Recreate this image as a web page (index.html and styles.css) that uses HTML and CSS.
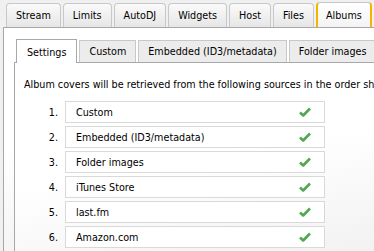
FILE: index.html
```html
<!DOCTYPE html>
<html lang="en">
	<head>
		<meta charset="UTF-8">
		<title>Albums</title>
		<link rel="stylesheet" href="styles.css">
	</head>
	<body>
		<!-- Main tabs -->
		<div class="tabs">
			<div class="tab">Stream</div>
			<div class="tab">Limits</div>
			<div class="tab">AutoDJ</div>
			<div class="tab">Widgets</div>
			<div class="tab">Host</div>
			<div class="tab">Files</div>
			<div class="tab active">Albums</div>
			<div class="tab">&nbsp;</div>
		</div>

		<div class="panel">
			<!-- Sub tabs -->
			<div class="subtabs">
				<div class="subtab active">Settings</div>
				<div class="subtab">Custom</div>
				<div class="subtab">Embedded (ID3/metadata)</div>
				<div class="subtab">Folder images</div>
			</div>

			<div class="subpanel">
				<p class="intro">Album covers will be retrieved from the following sources in the order shown below.</p>

				<ol class="sources">
					<li><span class="num">1.</span><div class="source">Custom<span class="check"></span></div></li>
					<li><span class="num">2.</span><div class="source">Embedded (ID3/metadata)<span class="check"></span></div></li>
					<li><span class="num">3.</span><div class="source">Folder images<span class="check"></span></div></li>
					<li><span class="num">4.</span><div class="source">iTunes Store<span class="check"></span></div></li>
					<li><span class="num">5.</span><div class="source">last.fm<span class="check"></span></div></li>
					<li><span class="num">6.</span><div class="source">Amazon.com<span class="check"></span></div></li>
				</ol>
			</div>
		</div>
	</body>
</html>
```
FILE: styles.css
```css
body {
	margin: 0;
	padding: 3px 0 0 3px;
	background: #f0f0f0;
	font-family: "DejaVu Sans Condensed", "DejaVu Sans", sans-serif;
	font-stretch: condensed;
	font-size: 10.7px;
	color: #000;
	overflow: hidden;
	height: 248px;
}

/* Main tabs */
.tabs {
	display: flex;
	gap: 2px;
	padding-left: 3px;
	white-space: nowrap;
}

.tab {
	height: 23px;
	line-height: 23px;
	padding: 0 9px;
	border: 1px solid #c8c8c8;
	border-bottom: none;
	border-radius: 4px 4px 0 0;
	background: linear-gradient(#fafafa, #e6e6e6);
	color: #000;
}

.tab.active {
	height: 24px;
	margin-top: -1px;
	line-height: 25px;
	background: linear-gradient(#ffffff, #f3f3f3);
	border-color: #c8c8c8 #f4b400;
	border-width: 1px 2px 0 2px;
	padding: 0 8px;
}

.panel {
	border: 1px solid #a8a8a8;
	border-right: none;
	background: linear-gradient(170deg, #ffffff 40%, #ececec);
	padding: 11px 0 0 10px;
	height: 230px;
}

/* Sub tabs */
.subtabs {
	display: flex;
	gap: 2px;
	padding-left: 2px;
	white-space: nowrap;
	align-items: flex-end;
}

.subtab {
	height: 21px;
	line-height: 22px;
	padding: 0 9px;
	border: 1px solid #c8c8c8;
	border-bottom: none;
	background: #ececec;
}

.subtab.active {
	height: 23px;
	line-height: 25px;
	padding: 0 10px;
	background: #fff;
	margin-bottom: -1px;
	position: relative;
	border-color: #a8a8a8;
}

.subpanel {
	border: 1px solid #a8a8a8;
	border-right: none;
	background: linear-gradient(170deg, #ffffff 45%, #efefef);
	padding: 15px 0 0 9px;
	height: 200px;
}

.intro {
	margin: 0 0 10px;
	white-space: nowrap;
}

.sources {
	list-style: none;
	margin: 0;
	padding: 0;
	display: flex;
	flex-direction: column;
	gap: 3px;
}

.sources li {
	display: flex;
	align-items: center;
}

.num {
	width: 34px;
	text-align: right;
	padding-right: 7px;
}

.source {
	display: flex;
	align-items: center;
	justify-content: space-between;
	width: 235px;
	height: 20px;
	padding: 0 13px 0 10px;
	border: 1px solid #d9d9d9;
	background: #fff;
}

.check {
	width: 12px;
	height: 10px;
	background: url("data:image/svg+xml;utf8,<svg xmlns='http://www.w3.org/2000/svg' width='12' height='10' viewBox='0 0 12 10'><path d='M1 5.5 L4.2 8.5 L11 1.5' fill='none' stroke='%2352a852' stroke-width='2.6' stroke-linejoin='round'/></svg>") no-repeat;
}
```
